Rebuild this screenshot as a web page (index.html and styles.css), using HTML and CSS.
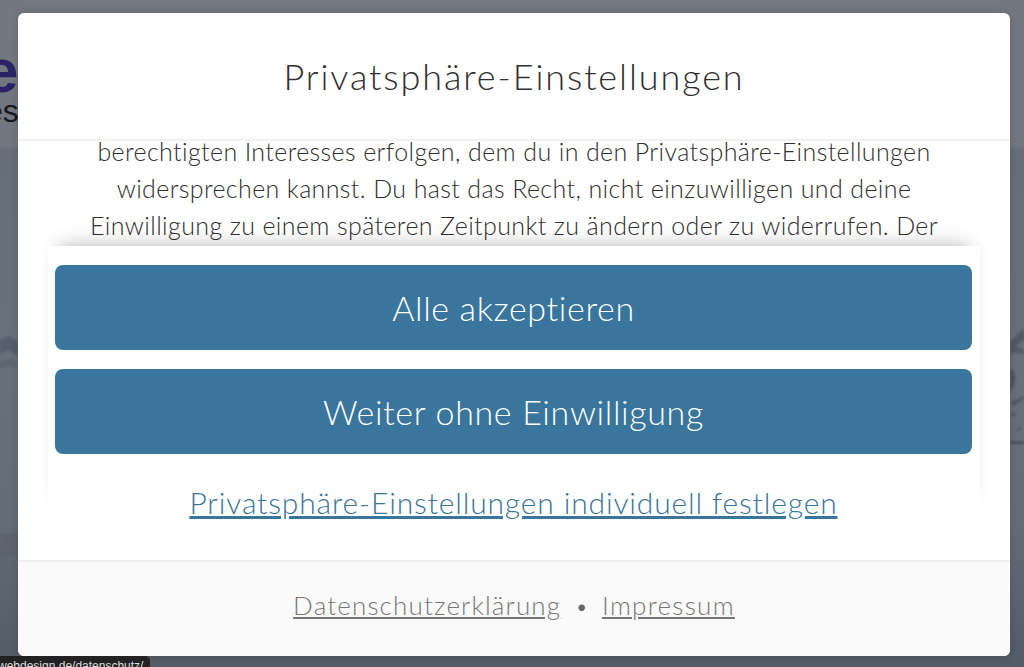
FILE: index.html
```html
<!DOCTYPE html>
<html lang="de">
<head>
    <meta charset="UTF-8">
    <meta name="viewport" content="width=device-width, initial-scale=1.0">
    <title>Privatsphäre-Einstellungen</title>
    <link rel="stylesheet" href="styles.css">
</head>
<body>
    <div class="backdrop">
        <span class="logo-letter">e</span>
        <span class="logo-sub">es</span>
        <svg class="rocks rocks-left" viewBox="0 0 18 240" aria-hidden="true">
            <path d="M0 10 L10 6 L18 12 L18 26 L8 20 L0 24 Z" fill="#565d6b"/>
            <path d="M0 32 L12 28 L18 34 L18 37 L6 36 L0 38 Z" fill="#5e6571"/>
            <path d="M0 204 H18 V226 H0 Z" fill="#5c636e"/>
        </svg>
        <svg class="rocks rocks-right" viewBox="0 0 14 140" aria-hidden="true">
            <path d="M0 22 L14 8 V20 L6 26 L14 30 V34 L3 32 L0 36 Z" fill="#505864"/>
            <path d="M0 48 Q5 50 5 60 Q3 70 0 72 Z" fill="#4b525e"/>
            <path d="M1 82 L14 76 V79 L3 86 Z" fill="#4f5763"/>
            <path d="M1 94 L6 92 L6 95 L1 97 Z M7 108 L11 107 L11 110 L7 111 Z" fill="#535b66"/>
            <path d="M0 121 H14 V124 H0 Z" fill="#474f5a"/>
        </svg>
    </div>

    <div class="modal">
        <header class="modal-head">
            <h1>Privatsphäre-Einstellungen</h1>
        </header>

        <div class="modal-text">
            <p>berechtigten Interesses erfolgen, dem du in den Privatsphäre-Einstellungen<br>
            widersprechen kannst. Du hast das Recht, nicht einzuwilligen und deine<br>
            Einwilligung zu einem späteren Zeitpunkt zu ändern oder zu widerrufen. Der</p>
        </div>

        <div class="modal-actions">
            <a class="btn" href="#">Alle akzeptieren</a>
            <a class="btn" href="#">Weiter ohne Einwilligung</a>
            <a class="settings-link" href="#">Privatsphäre-Einstellungen individuell festlegen</a>
        </div>

        <footer class="modal-foot">
            <a class="foot-long" href="#">Datenschutzerklärung</a>
            <span class="dot">•</span>
            <a class="foot-short" href="#">Impressum</a>
        </footer>
    </div>

    <div class="status-tip">webdesign.de/datenschutz/</div>
</body>
</html>
```

FILE: styles.css
```css
* { box-sizing: border-box; }
body {
    margin: 0;
    height: 667px;
    overflow: hidden;
    padding: 13px 14px 11px 18px;
    font-family: 'Lato', 'Open Sans', sans-serif;
    font-weight: 300;
    color: #2f2f2f;
    background: #6d737e;
}
a { color: inherit; }

.backdrop {
    position: absolute;
    inset: 0;
    overflow: hidden;
    background:
        linear-gradient(180deg, #737780 0, #72767f 145px, #676e78 150px, #68707a 330px, #646c76 520px, #525b66 100%);
}
.logo-letter {
    position: absolute;
    left: -16px;
    top: 46px;
    font: bold 62px/50px 'Liberation Sans', sans-serif;
    color: #2b2366;
}
.logo-sub {
    position: absolute;
    left: -15px;
    top: 96px;
    font: 32px/30px 'Liberation Sans', sans-serif;
    color: #17181c;
}
.rocks { position: absolute; filter: blur(1px); }
.rocks-left { left: 0; top: 330px; width: 18px; height: 240px; }
.rocks-right { right: 0; top: 320px; width: 14px; height: 140px; }

.modal {
    position: relative;
    height: 643px;
    background: #fff;
    border-radius: 6px;
    display: flex;
    flex-direction: column;
    overflow: hidden;
    box-shadow: 0 0 8px rgba(0,0,0,0.15);
}
.modal-head {
    height: 128px;
    flex: none;
    display: flex;
    align-items: center;
    justify-content: center;
    border-bottom: 2px solid #f1f1f2;
}
h1 {
    margin: 0;
    font-size: 36px;
    font-weight: 300;
    letter-spacing: 1.9px;
    color: #2f2f2f;
}
.modal-text {
    height: 105px;
    flex: none;
    text-align: center;
    font-size: 25px;
    line-height: 37px;
    letter-spacing: 0.38px;
}
.modal-text p { margin: -8px 0 0; }
.modal-actions {
    position: relative;
    flex: 1;
    margin: 0 30px 40px;
    display: flex;
    flex-direction: column;
    align-items: center;
    gap: 19px;
    padding: 19px 8px 0 7px;
    background: #fff;
    box-shadow: 0 -12px 18px -12px rgba(0,0,0,0.3);
}
.btn {
    width: 100%;
    height: 85px;
    flex: none;
    display: flex;
    align-items: center;
    justify-content: center;
    background: #39759c;
    border-radius: 8px;
    color: #fff;
    font-size: 34px;
    letter-spacing: 0.65px;
    text-decoration: none;
}
.settings-link {
    margin-top: 11px;
    font-size: 30px;
    letter-spacing: 0.85px;
    color: #39759c;
}
.modal-foot {
    height: 96px;
    flex: none;
    display: flex;
    align-items: center;
    justify-content: center;
    gap: 14px;
    padding-bottom: 8px;
    background: #fafafa;
    border-top: 2px solid #efefef;
    font-size: 26px;
    color: #777;
}
.foot-long { letter-spacing: 1.15px; }
.foot-short { letter-spacing: 1.3px; }
.dot { font-size: 22px; color: #666; }

.status-tip {
    position: absolute;
    left: -2px;
    bottom: -9px;
    height: 20px;
    padding-right: 7px;
    background: #222;
    border-radius: 0 5px 0 0;
    color: #ddd;
    font: 12px/20px 'Liberation Sans', sans-serif;
    white-space: nowrap;
}
```
